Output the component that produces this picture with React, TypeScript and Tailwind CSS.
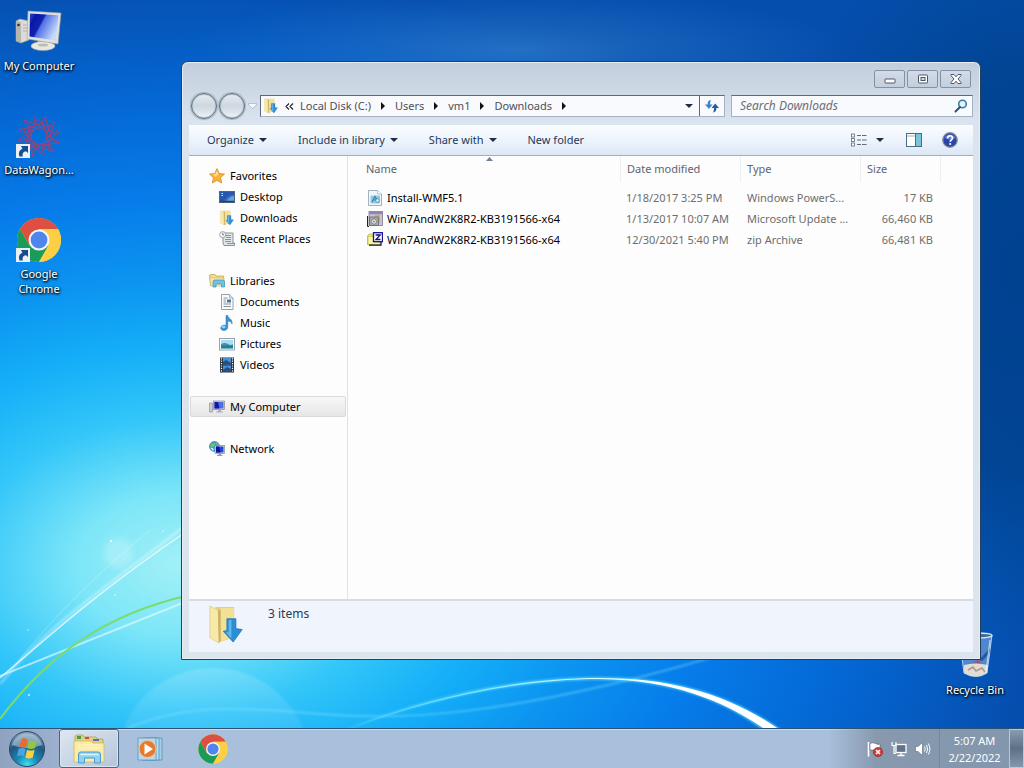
import { useState } from "react";
import type { ReactNode } from "react";

interface NavItem {
  label: string;
  icon: ReactNode;
}

interface NavGroup {
  root: NavItem;
  children: NavItem[];
}

interface FileRow {
  name: string;
  date: string;
  type: string;
  size: string;
  icon: ReactNode;
}

/* ---------- Wallpaper ---------- */

function Wallpaper() {
  return (
    <svg
      className="absolute inset-0 h-full w-full"
      viewBox="0 0 1024 728"
      preserveAspectRatio="none"
      aria-hidden="true"
    >
      <defs>
        <radialGradient
          id="sky"
          gradientUnits="userSpaceOnUse"
          cx="0"
          cy="0"
          r="1"
          gradientTransform="translate(180 565) scale(860 590)"
        >
          <stop offset="0" stopColor="#a2f0f6" />
          <stop offset="0.12" stopColor="#7de6f8" />
          <stop offset="0.25" stopColor="#33c6f9" />
          <stop offset="0.37" stopColor="#14aef8" />
          <stop offset="0.48" stopColor="#0c95f0" />
          <stop offset="0.62" stopColor="#067cea" />
          <stop offset="0.8" stopColor="#0466d2" />
          <stop offset="1" stopColor="#064eae" />
        </radialGradient>
        <radialGradient
          id="rightShade"
          gradientUnits="userSpaceOnUse"
          cx="0"
          cy="0"
          r="1"
          gradientTransform="translate(1024 270) scale(260 400)"
        >
          <stop offset="0" stopColor="#004290" />
          <stop offset="0.5" stopColor="#00438f" stopOpacity="0.85" />
          <stop offset="1" stopColor="#004a9c" stopOpacity="0" />
        </radialGradient>
        <radialGradient id="topGlow">
          <stop offset="0" stopColor="#3b86d0" stopOpacity="0.55" />
          <stop offset="1" stopColor="#2f7bcb" stopOpacity="0" />
        </radialGradient>
        <linearGradient id="bubble" x1="0" y1="0" x2="0" y2="1">
          <stop offset="0" stopColor="#fff" stopOpacity="0.16" />
          <stop offset="0.5" stopColor="#fff" stopOpacity="0.02" />
        </linearGradient>
        <linearGradient id="blade" x1="0" y1="0" x2="1" y2="0">
          <stop offset="0" stopColor="#7ff0ff" stopOpacity="0.2" />
          <stop offset="0.35" stopColor="#8ff0ff" stopOpacity="0.9" />
          <stop offset="0.7" stopColor="#fff" />
          <stop offset="1" stopColor="#fff" />
        </linearGradient>
        <filter id="soft">
          <feGaussianBlur stdDeviation="1.2" />
        </filter>
        <filter id="softer">
          <feGaussianBlur stdDeviation="3" />
        </filter>
      </defs>
      <rect width="1024" height="728" fill="url(#sky)" />
      <rect x="740" width="284" height="728" fill="url(#rightShade)" />
      <ellipse cx="520" cy="50" rx="330" ry="60" fill="url(#topGlow)" />

      <circle cx="118" cy="553" r="15" fill="#fff" opacity="0.22" filter="url(#softer)" />
      <path d="M0 684C50 622 110 585 190 522" fill="none" stroke="#fff" strokeWidth="3" opacity="0.3" filter="url(#soft)" />
      <path d="M0 678C50 635 100 590 190 529" fill="none" stroke="#fff" strokeWidth="1.5" opacity="0.7" />
      <path d="M10 672C50 620 90 580 150 530" fill="none" stroke="#fff" opacity="0.25" />
      <path d="M0 676C60 652 120 628 190 600" fill="none" stroke="#e4fbff" strokeWidth="2" opacity="0.65" />
      <path d="M0 719C48 655 105 614 190 595" fill="none" stroke="#79dc6c" strokeWidth="2" />
      <g fill="#fff" opacity="0.8">
        <circle cx="111" cy="541" r="1.2" />
        <circle cx="163" cy="531" r="0.8" />
        <circle cx="115" cy="595" r="0.8" />
        <circle cx="29" cy="695" r="1" />
        <circle cx="28" cy="630" r="0.7" />
      </g>

      <circle cx="213" cy="765" r="97" fill="url(#bubble)" filter="url(#soft)" />
      <path d="M128 728C190 702 250 708 320 714S500 720 720 655" fill="none" stroke="#8fe6ff" strokeWidth="2" opacity="0.4" filter="url(#soft)" />
      <path d="M340 732C430 694 520 677 600 677C680 677 735 697 785 732L766 732C725 702 676 681 600 680C520 680 430 698 340 732Z" fill="#5cd8ff" opacity="0.8" filter="url(#soft)" />
      <path d="M345 730C430 696 520 678 600 678C680 678 735 698 783 732L769 732C728 703 676 680 600 679C520 679 430 698 345 730Z" fill="url(#blade)" />
    </svg>
  );
}

/* ---------- Icons ---------- */

function ChromeIcon({ className }: { className: string }) {
  return (
    <svg viewBox="0 0 48 48" className={className} aria-hidden="true">
      <circle cx="24" cy="24" r="22" fill="#fdcf45" />
      <path d="M4.95 13A22 22 0 0 1 43.05 13L24 13L14.5 29.5Z" fill="#dd4f41" />
      <path d="M4.95 13A22 22 0 0 0 24 46L33.5 29.5L24 34L14.5 29.5Z" fill="#1a9c58" />
      <path d="M43.05 13A22 22 0 0 1 24 46L33.5 29.5L30 15L24 13Z" fill="#fdcf45" />
      <circle cx="24" cy="24" r="10.5" fill="#f4f6fa" />
      <circle cx="24" cy="24" r="8.4" fill="#4e86ee" />
    </svg>
  );
}

function ShortcutArrow() {
  return (
    <svg viewBox="0 0 14 14" className="absolute bottom-[2px] left-px h-[14px] w-[14px]" aria-hidden="true">
      <rect width="14" height="14" fill="#e9f0f7" />
      <path d="M3.500 12.500C2 8 4 5.500 6.500 5L5 2L12 2L12 9L10 7.200C7.500 7.500 6 9 6.800 12.500Z" fill="#174d8c" />
    </svg>
  );
}

function ComputerIcon() {
  return (
    <svg viewBox="0 0 48 48" className="h-12 w-12" aria-hidden="true">
      <defs>
        <linearGradient id="pcScreen" x1="0" y1="0" x2="1" y2="0.5">
          <stop offset="0" stopColor="#2a4fe0" />
          <stop offset="0.2" stopColor="#0a17a4" />
          <stop offset="0.45" stopColor="#1023b4" />
          <stop offset="0.5" stopColor="#5070e6" />
          <stop offset="1" stopColor="#c8dafa" />
        </linearGradient>
      </defs>
      <path d="M1 13L5 11L14 13V32L6 35L1 33Z" fill="#dcdbd6" stroke="#9a9a96" strokeWidth="0.6" />
      <path d="M1 13L6 14V35L1 33Z" fill="#b6b5af" />
      <path d="M8 17H12M8 20H12M8 23H12" stroke="#a9a8a2" strokeWidth="0.8" />
      <circle cx="3.500" cy="17" r="1.300" fill="#333" />
      <path d="M23 32H33L34 38H22Z" fill="#c9c8c2" />
      <ellipse cx="28" cy="38" rx="12" ry="4.500" fill="#e8e7e1" stroke="#a5a49d" strokeWidth="0.6" />
      <ellipse cx="28" cy="37" rx="5" ry="1.500" fill="#bcbbb4" />
      <path d="M13 3L46 5L43 36L12 31Z" fill="#e1e2e0" stroke="#9c9c98" strokeWidth="0.6" />
      <path d="M15 5.500L43.500 7.200L41 32.500L14.500 28.500Z" fill="url(#pcScreen)" />
    </svg>
  );
}

function WagonIcon() {
  return (
    <svg viewBox="0 0 48 48" className="h-12 w-12" aria-hidden="true">
      <g fill="none" stroke="#b23a68" strokeWidth="0.7">
        {[0, 30, 60, 90, 120, 150].map((angle) => (
          <g key={angle} transform={`rotate(${angle} 24 24)`}>
            <path d="M19 3L29 14L30 19M29 45L19 34L18 29" stroke="#c93a55" />
            <path d="M31 9L19 14L17 20M17 39L29 34L31 28" />
            <path d="M18 5Q24 20 30 5M18 43Q24 28 30 43" strokeDasharray="2 1" />
          </g>
        ))}
        <circle cx="24" cy="24" r="8" stroke="#c93a55" strokeDasharray="3 1" />
      </g>
    </svg>
  );
}

function RecycleIcon() {
  return (
    <svg viewBox="0 0 48 48" className="h-12 w-12" aria-hidden="true">
      <path d="M8 3L41 3L36 41Q25 48 13 41Z" fill="#b9d8f2" fillOpacity="0.4" stroke="#d8ecfa" strokeWidth="0.8" />
      <path d="M13 33Q24 30 37 33L36 41Q25 48 13 41Z" fill="#e3dcd6" />
      <path d="M17 38L22 35L25 39L31 36L34 40" fill="none" stroke="#a9998f" strokeWidth="1.500" />
      <path d="M22 31L27 28L30 31Z" fill="#a8506e" />
      <path d="M28 28L39 16L38 22L31 29Z" fill="#1b4d94" opacity="0.8" />
      <ellipse cx="24.500" cy="3.500" rx="16.500" ry="2.500" fill="#3d6a91" stroke="#d8e6ee" strokeWidth="1.300" />
      <path d="M39 8L35 40" stroke="#fff" strokeWidth="1.200" opacity="0.6" />
    </svg>
  );
}

function DownloadFolder({ className }: { className: string }) {
  return (
    <svg viewBox="0 0 40 44" className={className} aria-hidden="true">
      <path d="M8 2H29V36L13 41Z" fill="#e6cf7c" />
      <path d="M14 3H29V35L14 40Z" fill="#f1e096" />
      <path d="M2 1L12 6V42L2 36Z" fill="#f7e9a8" stroke="#d8c070" strokeWidth="0.6" />
      <path d="M11 6L14 5V40L12 42Z" fill="#cdb063" />
      <path d="M21 15L31 15V26L38 27L28 41L17 29L21 28Z" fill="#2b8fd6" stroke="#1d6fb5" strokeWidth="0.8" />
      <path d="M23 17L26 16V37L20 30H23Z" fill="#62b6ea" />
    </svg>
  );
}

function SmallPc() {
  return (
    <svg viewBox="0 0 16 16" className="h-4 w-4" aria-hidden="true">
      <path d="M0.500 4H3.500V13H0.500Z" fill="#c9ccd0" stroke="#82868c" strokeWidth="0.6" />
      <rect x="4.500" y="2" width="11" height="8.500" fill="#d9dce0" stroke="#777" strokeWidth="0.6" />
      <rect x="5.500" y="3" width="9" height="6.500" fill="#4b6ee0" />
      <path d="M5.500 3H9L10.500 9.500H5.500Z" fill="#1515a8" />
      <path d="M9 10.500H12V12.500H14V13.500H7V12.500H9Z" fill="#aaafb4" />
    </svg>
  );
}

const starIcon = (
  <svg viewBox="0 0 16 16" className="h-4 w-4" aria-hidden="true">
    <path d="M8 0.600L10.200 5.500L15.500 6.100L11.600 9.700L12.700 15L8 12.300L3.300 15L4.400 9.700L0.500 6.100L5.800 5.500Z" fill="#f9b233" stroke="#d98a2b" strokeWidth="0.8" />
    <path d="M8 2.500L9.500 6.200L6 9L5 7L3 6.700L6.300 6.200Z" fill="#fde39a" />
  </svg>
);

const desktopIcon = (
  <svg viewBox="0 0 16 16" className="h-4 w-4" aria-hidden="true">
    <rect x="0.500" y="2.500" width="15" height="11" fill="#3b6fc4" stroke="#53647c" />
    <path d="M1 3H15V6Q9 5 5 12H1Z" fill="#2857ae" />
    <path d="M8 12Q11 7 15 7V12Z" fill="#63a4e4" />
    <rect x="1" y="11.800" width="14" height="1.400" fill="#29405f" />
    <path d="M2.500 4.500H4M2.500 6.500H4" stroke="#d9e8fa" />
  </svg>
);

const recentIcon = (
  <svg viewBox="0 0 16 16" className="h-4 w-4" aria-hidden="true">
    <path d="M4 2H14V12H15.500V14.500H5L4 12Z" fill="#e3e6e8" stroke="#7f868c" strokeWidth="0.9" />
    <path d="M7 4.500H12M7 6.500H12M6 8.500H12M6 10.500H12M8 12.500H15" stroke="#8d959b" />
    <circle cx="3.700" cy="3.700" r="3.100" fill="#f4f6f7" stroke="#8c9298" strokeWidth="0.8" />
    <path d="M3.700 1.800V3.900H5.200" fill="none" stroke="#5a6268" strokeWidth="0.8" />
  </svg>
);

const librariesIcon = (
  <svg viewBox="0 0 16 16" className="h-4 w-4" aria-hidden="true">
    <path d="M0.500 3Q0.500 1.500 2 1.500H6L7 3H14.500V12.500H1.500Z" fill="#f3dc87" stroke="#c2a654" strokeWidth="0.8" />
    <path d="M1 5H15V13H2Z" fill="#f9ecb2" stroke="#cdb566" strokeWidth="0.6" />
    <path d="M4 8.500Q4 7 5.500 7H14Q15.500 7 15.500 8.500V14H12.500V11H7V14H4Z" fill="#6fc4e4" stroke="#3b8fb6" strokeWidth="0.7" />
  </svg>
);

const documentIcon = (
  <svg viewBox="0 0 16 16" className="h-4 w-4" aria-hidden="true">
    <path d="M2.500 0.500H10.500L14 4V15.500H2.500Z" fill="#fbfcfc" stroke="#7f8a92" strokeWidth="0.8" />
    <path d="M10.500 0.500V4H14" fill="#dfe5e8" stroke="#7f8a92" strokeWidth="0.6" />
    <path d="M4.500 4H8.500M4.500 6H7M4.500 8H7M4.500 10H12M4.500 12.500H12" stroke="#748a99" strokeWidth="0.9" />
    <rect x="8" y="5.500" width="4" height="3" fill="#49799a" />
  </svg>
);

const musicIcon = (
  <svg viewBox="0 0 16 16" className="h-4 w-4" aria-hidden="true">
    <path d="M7 0.500H8.800C9 3.500 14 4 13 9C12.700 6.800 10.500 6 8.800 6V12C8.800 14.500 6.500 15.800 4.300 15.400C1.500 15 1 12.400 2.800 11C4 10 5.700 10 7 10.500Z" fill="#3a94d8" stroke="#2369a8" strokeWidth="0.5" />
    <ellipse cx="4.500" cy="12" rx="2" ry="1.300" fill="#8fd0f5" />
  </svg>
);

const picturesIcon = (
  <svg viewBox="0 0 16 16" className="h-4 w-4" aria-hidden="true">
    <rect x="0.500" y="2.500" width="15" height="11.500" fill="#fbfcfd" stroke="#8b99a6" strokeWidth="0.9" />
    <rect x="2" y="4" width="12" height="8.500" fill="#a7def3" />
    <path d="M2 8Q6 6 9 8T14 8V10H2Z" fill="#45969e" />
    <rect x="2" y="9.500" width="12" height="3" fill="#247d9a" />
  </svg>
);

const videosIcon = (
  <svg viewBox="0 0 16 16" className="h-4 w-4" aria-hidden="true">
    <rect x="1" y="0.500" width="14" height="15" fill="#26313d" />
    <rect x="4" y="1" width="8" height="6.500" fill="#4c8fd2" />
    <rect x="4" y="8.500" width="8" height="6.500" fill="#4c8fd2" />
    <path d="M4 5L7 3L12 6V7.500H4ZM4 13L8 10L12 12V15H4Z" fill="#23507f" />
    <path d="M2.500 1.200V15M13.500 1.200V15" stroke="#fff" strokeWidth="1.200" strokeDasharray="1.200 1.200" />
  </svg>
);

const networkIcon = (
  <svg viewBox="0 0 16 16" className="h-4 w-4" aria-hidden="true">
    <circle cx="5.500" cy="5.500" r="5" fill="#3f9fd0" stroke="#2b739c" strokeWidth="0.6" />
    <path d="M2 3Q5 1 6 3T3 6Q1 7 1.500 4ZM7 1Q9 2 9.500 4L7 3.500Z" fill="#6cc46b" />
    <path d="M1.500 7Q4 6 5 9L3.500 9.500Z" fill="#d5effb" />
    <rect x="6" y="4.500" width="9.500" height="8" fill="#dfe3e8" stroke="#747b84" strokeWidth="0.6" />
    <rect x="7" y="5.500" width="7.500" height="6" fill="#2346d4" />
    <path d="M7 5.500H10L11.500 11.500H7Z" fill="#0c1596" />
    <path d="M9.500 12.500H12V14H13.500V15H8V14H9.500Z" fill="#969ca3" />
  </svg>
);

const scriptFileIcon = (
  <svg viewBox="0 0 16 16" className="h-4 w-4" aria-hidden="true">
    <path d="M1.500 0.500H10.500L14.500 4V15.500H1.500Z" fill="#eef6fa" stroke="#8ba0ad" strokeWidth="0.8" />
    <path d="M10.500 0.500V4H14.500" fill="#fff" stroke="#8ba0ad" strokeWidth="0.6" />
    <rect x="3.500" y="5.500" width="9.500" height="8" rx="1" fill="#8fcbe6" />
    <path d="M5 12L8 6.500L11 12M6 10H10" fill="none" stroke="#3484b0" strokeWidth="1.200" />
    <circle cx="10.500" cy="10.500" r="1.800" fill="#e5f4fb" stroke="#2f7ea9" strokeWidth="0.7" />
  </svg>
);

const updateFileIcon = (
  <svg viewBox="0 0 16 16" className="h-4 w-4" aria-hidden="true">
    <rect x="2" y="0.500" width="13.500" height="14" fill="#c7c5d4" stroke="#7a7888" strokeWidth="0.8" />
    <rect x="2.500" y="1" width="12.500" height="2.200" fill="#8c86b6" />
    <path d="M8 4H13V12H11V6H8Z" fill="#e8a83a" />
    <rect x="2.500" y="6" width="9" height="8.500" fill="#a4a8ad" stroke="#5d6165" strokeWidth="0.7" />
    <circle cx="7" cy="10.500" r="2.600" fill="#dfe2e4" stroke="#666" strokeWidth="0.6" />
    <circle cx="7" cy="10.500" r="0.800" fill="#666" />
    <path d="M0.500 5V15.500H2" fill="none" stroke="#222" />
  </svg>
);

const zipFileIcon = (
  <svg viewBox="0 0 16 16" className="h-4 w-4" aria-hidden="true">
    <path d="M0.500 4L2 2H5L6 3.500V12.500H0.500Z" fill="#eeee66" stroke="#a3a33c" strokeWidth="0.6" />
    <path d="M1 4.500H13V12.500H1Z" fill="#f6f7a2" stroke="#b8b84c" strokeWidth="0.6" />
    <path d="M2 13.200H14V10" fill="none" stroke="#111" strokeWidth="1.200" />
    <rect x="6.500" y="0.700" width="9" height="9" fill="#fff" stroke="#12128a" strokeWidth="1.300" />
    <path d="M8.600 3H13.200L9 7.500H13.500" fill="none" stroke="#12128a" strokeWidth="1.300" />
  </svg>
);

function DownArrow() {
  return (
    <svg viewBox="0 0 8 4" className="h-1 w-2 shrink-0" aria-hidden="true">
      <path d="M0 0H8L4 4Z" fill="#1e2c44" />
    </svg>
  );
}

function StartOrb() {
  return (
    <svg viewBox="0 0 38 38" className="h-[38px] w-[38px]" aria-hidden="true">
      <defs>
        <radialGradient id="orb" cx="0.5" cy="0.95" r="0.9">
          <stop offset="0" stopColor="#3fe0f5" />
          <stop offset="0.35" stopColor="#1687b4" />
          <stop offset="0.7" stopColor="#22567e" />
          <stop offset="1" stopColor="#7f9fb8" />
        </radialGradient>
      </defs>
      <circle cx="19" cy="19" r="17.500" fill="url(#orb)" stroke="#2b4763" />
      <path d="M4 15A15.500 15.500 0 0 1 34 15Q19 21 4 15Z" fill="#cfe0ec" opacity="0.5" />
      <path d="M13.500 9Q16.500 7.500 19.500 9.500L18 17.500Q14.500 15.500 11 17.500Z" fill="#ee6a2c" />
      <path d="M21 10.300Q25 12 29 10.300L27 18Q23 20 19.300 18Z" fill="#93c83e" />
      <path d="M10.500 19Q14 17 17.600 19L16 26.500Q12.500 24.500 9 26.500Z" fill="#4ba4e0" />
      <path d="M19 19.700Q23 21.500 26.600 19.700L24.800 27.500Q21 29.500 17.300 27.500Z" fill="#fcd03c" />
    </svg>
  );
}

function ExplorerIcon() {
  return (
    <svg viewBox="0 0 34 30" className="h-[30px] w-[34px]" aria-hidden="true">
      <path d="M3 3Q3 1 5 1H11L12 3H24L25 5H31V27H3Z" fill="#e9cf77" stroke="#b39a4c" strokeWidth="0.7" />
      <path d="M5 2H9V5H5Z" fill="#3fa046" />
      <path d="M13 3H17V5H13Z" fill="#cf4b3b" />
      <path d="M2 7H19L21 9H32V28H2Z" fill="#faeba6" stroke="#cdb565" strokeWidth="0.7" />
      <path d="M21 5H27V7H21Z" fill="#4776d0" />
      <path d="M6 11H28M6 14H28" stroke="#fdf6cf" />
      <path d="M6.500 29V20Q6.500 18 9 18H26Q28.500 18 28.500 20V29H22.500V24H12.500V29Z" fill="#8fd2f0" stroke="#4b9ccb" />
      <path d="M8.500 20.500H26.500" stroke="#d9f3fd" strokeWidth="1.500" />
    </svg>
  );
}

function MediaIcon() {
  return (
    <svg viewBox="0 0 28 26" className="h-[26px] w-7" aria-hidden="true">
      <path d="M10 2H26V24H10Z" fill="#a9cfe4" stroke="#4f94bb" strokeWidth="0.8" />
      <path d="M6 2H23V24H6Z" fill="#b9dcee" stroke="#4f94bb" strokeWidth="0.8" />
      <path d="M2 2H20V24H2Z" fill="#bdd6e8" stroke="#5795b9" strokeWidth="0.8" />
      <circle cx="11.500" cy="13" r="8.500" fill="#e87a2c" stroke="#f6cba5" strokeWidth="0.8" />
      <path d="M8.500 7.500L17 13L8.500 18.500Z" fill="#fff" />
    </svg>
  );
}

/* ---------- Data ---------- */

const navGroups: NavGroup[] = [
  {
    root: { label: "Favorites", icon: starIcon },
    children: [
      { label: "Desktop", icon: desktopIcon },
      { label: "Downloads", icon: <DownloadFolder className="h-4 w-4" /> },
      { label: "Recent Places", icon: recentIcon },
    ],
  },
  {
    root: { label: "Libraries", icon: librariesIcon },
    children: [
      { label: "Documents", icon: documentIcon },
      { label: "Music", icon: musicIcon },
      { label: "Pictures", icon: picturesIcon },
      { label: "Videos", icon: videosIcon },
    ],
  },
  { root: { label: "My Computer", icon: <SmallPc /> }, children: [] },
  { root: { label: "Network", icon: networkIcon }, children: [] },
];

const files: FileRow[] = [
  {
    name: "Install-WMF5.1",
    date: "1/18/2017 3:25 PM",
    type: "Windows PowerS...",
    size: "17 KB",
    icon: scriptFileIcon,
  },
  {
    name: "Win7AndW2K8R2-KB3191566-x64",
    date: "1/13/2017 10:07 AM",
    type: "Microsoft Update ...",
    size: "66,460 KB",
    icon: updateFileIcon,
  },
  {
    name: "Win7AndW2K8R2-KB3191566-x64",
    date: "12/30/2021 5:40 PM",
    type: "zip Archive",
    size: "66,481 KB",
    icon: zipFileIcon,
  },
];

const crumbs = ["Local Disk (C:)", "Users", "vm1", "Downloads"];

/* ---------- Desktop ---------- */

function DesktopShortcut({
  label,
  shortcut = false,
  children,
}: {
  label: string;
  shortcut?: boolean;
  children: ReactNode;
}) {
  return (
    <button
      type="button"
      className="flex w-[78px] flex-col items-center gap-[2px] text-center leading-[15px] text-white [text-shadow:1px_1px_2px_#000,0_1px_3px_#000]"
    >
      <span className="relative h-12 w-12">
        {children}
        {shortcut && <ShortcutArrow />}
      </span>
      <span>{label}</span>
    </button>
  );
}

/* ---------- Explorer window ---------- */

const captionButton =
  "flex h-[18px] w-[31px] items-center justify-center rounded-[2px] border border-[#8492a6] bg-linear-to-b from-[#d3dce7] to-[#c3cfde]";

function TitleBar() {
  return (
    <div className="flex h-[30px] items-start justify-end gap-[2px] pt-2 pr-[2px]">
      <button type="button" aria-label="Minimize" className={captionButton}>
        <svg viewBox="0 0 12 10" className="h-[10px] w-3" aria-hidden="true">
          <rect x="1" y="5" width="10" height="4" rx="0.5" fill="#fff" stroke="#4c566a" />
        </svg>
      </button>
      <button type="button" aria-label="Maximize" className={captionButton}>
        <svg viewBox="0 0 12 10" className="h-[10px] w-3" aria-hidden="true">
          <rect x="1.500" y="1" width="9" height="8" rx="0.5" fill="#fff" stroke="#4c566a" />
          <rect x="4" y="3.500" width="4" height="3" fill="#cfd8e4" stroke="#4c566a" />
        </svg>
      </button>
      <button type="button" aria-label="Close" className={captionButton}>
        <svg viewBox="0 0 12 10" className="h-[10px] w-3" aria-hidden="true">
          <path d="M1 0.500H4L6 2.800L8 0.500H11V1.500L8 5L11 8.500V9.500H8L6 7.200L4 9.500H1V8.500L4 5L1 1.500Z" fill="#fff" stroke="#4c566a" />
        </svg>
      </button>
    </div>
  );
}

const roundButton =
  "h-[26px] w-[26px] rounded-full border border-[#5f6d7c] bg-linear-to-b from-[#e6ecf1] via-[#cdd7df] to-[#eef3f7] shadow-[inset_0_0_0_1px_#b4c0cb,0_0_1px_1px_#aab7c5]";

function AddressRow() {
  return (
    <div className="mb-[5px] flex h-7 items-center pl-[2px]">
      <div className="flex gap-[2px]">
        <button type="button" aria-label="Back" className={roundButton} />
        <button type="button" aria-label="Forward" className={roundButton} />
      </div>
      <button type="button" aria-label="Recent pages" className="mr-[3px] ml-[3px]">
        <svg viewBox="0 0 9 6" className="h-[6px] w-[9px]" aria-hidden="true">
          <path d="M0.500 0.500H8.500V2L4.500 5.500L0.500 2Z" fill="#f4f8fb" stroke="#a9b6c5" strokeWidth="0.8" />
        </svg>
      </button>
      <div className="flex h-[22px] min-w-0 flex-1 items-center border border-[#a3b2c3] border-t-[#59687a] border-l-[#59687a] bg-[#f9fafe] text-[#4f4f57]">
        <DownloadFolder className="mx-[2px] h-4 w-4 shrink-0" />
        <svg viewBox="0 0 9 7" className="mr-[6px] ml-1 h-[7px] w-[9px]" aria-hidden="true">
          <path d="M4 0.500L1 3.500L4 6.500M8 0.500L5 3.500L8 6.500" fill="none" stroke="#222" strokeWidth="1.100" />
        </svg>
        <nav aria-label="Address" className="flex items-center">
          {crumbs.map((crumb) => (
            <span key={crumb} className="flex items-center">
              <button type="button">{crumb}</button>
              <svg viewBox="0 0 4 8" className="mx-[10px] h-2 w-1" aria-hidden="true">
                <path d="M0 0L4 4L0 8Z" fill="#111" />
              </svg>
            </span>
          ))}
        </nav>
        <button type="button" aria-label="Previous locations" className="mr-[6px] ml-auto">
          <DownArrow />
        </button>
        <button
          type="button"
          aria-label="Refresh"
          className="flex h-full w-[25px] items-center justify-center border-l border-[#59687a]"
        >
          <svg viewBox="0 0 16 16" className="h-4 w-4" aria-hidden="true">
            <path d="M7 2C4 2.500 3.500 4 3.700 6.500H1L4.900 11L8.600 6.500H6.200C6 5 6.200 3.500 7 2Z" fill="#3f86c9" />
            <path d="M9 14.500C12 14 12.500 12 12.300 10H15L11.200 5.500L7.500 10H9.900C10 11.500 9.800 13 9 14.500Z" fill="#275f9e" />
          </svg>
        </button>
      </div>
      <label className="ml-[6px] flex h-[22px] w-[242px] items-center border border-[#a3b2c3] border-t-[#59687a] bg-[#f9fafe] px-2">
        <input
          type="text"
          aria-label="Search Downloads"
          placeholder="Search Downloads"
          className="min-w-0 flex-1 bg-transparent text-[12px] italic outline-none placeholder:text-[#6d6d74]"
        />
        <svg viewBox="0 0 14 14" className="-mr-1 h-[14px] w-[14px]" aria-hidden="true">
          <circle cx="8.500" cy="5" r="3.800" fill="#e4f3fa" stroke="#3a7fa5" strokeWidth="1.600" />
          <path d="M6 8L1.500 12.500" stroke="#2f4f74" strokeWidth="2" strokeLinecap="round" />
        </svg>
      </label>
    </div>
  );
}

function CommandBar() {
  return (
    <div className="flex h-[31px] items-center gap-[31px] border-b border-[#a0afc3] bg-linear-to-b from-[#fbfdff] via-[#edf4fc] via-50% to-[#dce7f5] pr-[15px] pl-[18px] text-[#1e395b]">
      {["Organize", "Include in library", "Share with"].map((label) => (
        <button key={label} type="button" className="flex items-center gap-[5px]">
          {label}
          <DownArrow />
        </button>
      ))}
      <button type="button">New folder</button>
      <div className="ml-auto flex items-center">
        <button type="button" aria-label="Change your view" className="flex items-center gap-[9px]">
          <svg viewBox="0 0 16 14" className="h-[14px] w-4" aria-hidden="true">
            <g fill="#fff" stroke="#5e6b7c" strokeWidth="0.8">
              <rect x="0.500" y="1" width="3" height="3" />
              <rect x="0.500" y="5.500" width="3" height="3" />
              <rect x="0.500" y="10" width="3" height="3" />
            </g>
            <path d="M6 2.500H10M11 2.500H15.500M6 7H10M11 7H15.500M6 11.500H10M11 11.500H15.500" stroke="#5e6b7c" />
          </svg>
          <DownArrow />
        </button>
        <button type="button" aria-label="Show the preview pane" className="ml-[22px]">
          <svg viewBox="0 0 16 14" className="h-[14px] w-4" aria-hidden="true">
            <rect x="0.500" y="0.500" width="15" height="13" fill="#fdfefe" stroke="#4c6c86" />
            <path d="M1 3H10" stroke="#9db2c2" />
            <rect x="10" y="1" width="5" height="12" fill="#7cc3dc" />
            <path d="M9.500 1V13" stroke="#4c6c86" />
          </svg>
        </button>
        <button type="button" aria-label="Get help" className="ml-5">
          <svg viewBox="0 0 16 16" className="h-4 w-4" aria-hidden="true">
            <circle cx="8" cy="8" r="7.300" fill="#2b44a8" stroke="#8e949e" strokeWidth="1.300" />
            <path d="M2.500 6A6 6 0 0 1 13.500 6Q8 9 2.500 6Z" fill="#7d98e0" opacity="0.7" />
            <path d="M5.700 6.200C5.700 3 10.500 3 10.500 6C10.500 7.800 8.200 7.800 8.200 9.800" fill="none" stroke="#fff" strokeWidth="1.700" />
            <circle cx="8.200" cy="12" r="1.100" fill="#fff" />
          </svg>
        </button>
      </div>
    </div>
  );
}

function NavPane({ selected, onSelect }: { selected: string; onSelect: (label: string) => void }) {
  const rowClass = (label: string) =>
    selected === label
      ? "rounded-[2px] border-[#d9d9d9] bg-linear-to-b from-[#f8f8f8] to-[#e6e6e6]"
      : "border-transparent";

  return (
    <nav
      aria-label="Folders"
      className="flex w-[159px] shrink-0 flex-col gap-[21px] overflow-hidden border-r border-[#dbe3f0] px-[1px] pt-[9px]"
    >
      {navGroups.map((group) => (
        <div key={group.root.label}>
          <button
            type="button"
            onClick={() => onSelect(group.root.label)}
            className={`flex h-[21px] w-full items-center gap-[5px] border pl-[18px] ${rowClass(group.root.label)}`}
          >
            {group.root.icon}
            {group.root.label}
          </button>
          {group.children.map((item) => (
            <button
              key={item.label}
              type="button"
              onClick={() => onSelect(item.label)}
              className={`flex h-[21px] w-full items-center gap-[5px] border pl-7 ${rowClass(item.label)}`}
            >
              {item.icon}
              {item.label}
            </button>
          ))}
        </div>
      ))}
    </nav>
  );
}

function FileTable() {
  return (
    <div className="relative min-w-0 flex-1">
      {/* Sort direction marker */}
      <svg viewBox="0 0 7 4" className="absolute top-px left-[138px] h-1 w-[7px]" aria-hidden="true">
        <path d="M0 4L3.500 0L7 4Z" fill="#6c7f96" />
      </svg>
      <table className="w-full table-fixed border-collapse text-left">
        <colgroup>
          <col className="w-[272px]" />
          <col className="w-[120px]" />
          <col className="w-[120px]" />
          <col className="w-[80px]" />
          <col />
        </colgroup>
        <thead className="text-[#5c6470]">
          <tr className="h-[31px] align-top">
            <th className="p-0 font-normal">
              <div className="flex h-[26px] items-center pl-[18px]">Name</div>
            </th>
            {["Date modified", "Type", "Size"].map((label) => (
              <th key={label} className="p-0 font-normal">
                <div className="flex h-[26px] items-center border-l border-[#eceff3] pl-[6px]">{label}</div>
              </th>
            ))}
            <td className="p-0">
              <div className="h-[26px] border-l border-[#eceff3]" />
            </td>
          </tr>
        </thead>
        <tbody className="whitespace-nowrap text-[#6d6d6d]">
          {files.map((file) => (
            <tr key={file.date} className="h-[21px]">
              <td className="p-0 pl-[19px] text-black">
                <div className="flex items-center gap-1">
                  {file.icon}
                  {file.name}
                </div>
              </td>
              <td className="p-0 pl-[6px]">{file.date}</td>
              <td className="p-0 pl-[7px]">{file.type}</td>
              <td className="p-0 pr-[7px] text-right">{file.size}</td>
              <td />
            </tr>
          ))}
        </tbody>
      </table>
    </div>
  );
}

function ExplorerWindow() {
  const [selected, setSelected] = useState("My Computer");

  return (
    <section
      aria-label="Downloads"
      className="absolute top-[61px] right-[43px] bottom-[68px] left-[181px] flex flex-col rounded-t-[7px] border border-[#24405e] bg-[#dae3ee] bg-linear-to-b from-[#c2cedc] via-[#dae4ef] via-10% to-[#dce4ec] px-[7px] pb-[7px] shadow-[inset_0_0_0_1px_#e6edf4]"
    >
      <TitleBar />
      <AddressRow />
      <CommandBar />
      <div className="flex min-h-0 flex-1 bg-[#fdfdfe]">
        <NavPane selected={selected} onSelect={setSelected} />
        <FileTable />
      </div>
      <footer className="flex h-[53px] items-start border-t-2 border-[#d5dce8] bg-[#f0f4fd] pl-[19px] text-[12px] text-[#2a3a52]">
        <DownloadFolder className="mt-[2px] h-[44px] w-9" />
        <span className="mt-[5px] ml-6 leading-4">3 items</span>
      </footer>
    </section>
  );
}

/* ---------- Taskbar ---------- */

function Taskbar() {
  return (
    <footer className="flex h-10 shrink-0 items-stretch border-t border-[#2c5274] bg-[#a9c0dd] shadow-[inset_0_1px_0_#c9dbee]">
      <button
        type="button"
        aria-label="Start"
        className="flex w-[59px] items-center bg-linear-to-r from-[#8fa3c0] to-[#9db1cf] pl-2"
      >
        <StartOrb />
      </button>
      <button
        type="button"
        aria-label="Windows Explorer"
        className="flex w-[60px] items-center justify-center rounded-[3px] border border-[#4c6380] bg-linear-to-br from-[#dfe7f0] to-[#b4c5da] shadow-[inset_0_0_0_1px_#dce6f0]"
      >
        <ExplorerIcon />
      </button>
      <button type="button" aria-label="Windows Media Player" className="flex w-[62px] items-center justify-center">
        <MediaIcon />
      </button>
      <button type="button" aria-label="Google Chrome" className="flex w-16 items-center justify-center">
        <ChromeIcon className="h-8 w-8" />
      </button>
      <div className="ml-auto flex items-center bg-linear-to-r from-transparent via-[#8899ae] via-25% to-[#8296ad] pl-[40px] text-white">
        <div className="flex items-center gap-2 pr-2">
          <button type="button" aria-label="Action Center">
            <svg viewBox="0 0 16 16" className="h-4 w-4" aria-hidden="true">
              <path d="M1.500 1V15.500" stroke="#fff" strokeWidth="1.600" />
              <path d="M3 2.500Q6 1 8.500 2.500T13 3V9H3Z" fill="#fff" stroke="#3e4d60" strokeWidth="0.5" />
              <circle cx="11" cy="11" r="4.600" fill="#d23b32" stroke="#8b1f1c" strokeWidth="0.6" />
              <path d="M9 9L13 13M13 9L9 13" stroke="#fff" strokeWidth="1.600" />
            </svg>
          </button>
          <button type="button" aria-label="Network status">
            <svg viewBox="0 0 16 16" className="h-4 w-4" aria-hidden="true">
              <rect x="5" y="3.500" width="10" height="8" fill="#60738a" stroke="#fff" strokeWidth="1.300" />
              <path d="M10 12V14.500M6.500 14.500H13.500" stroke="#fff" strokeWidth="1.300" />
              <path d="M1 1V4.500H5V1M3 4.500V12.500H5" fill="none" stroke="#fff" strokeWidth="1.200" />
            </svg>
          </button>
          <button type="button" aria-label="Volume">
            <svg viewBox="0 0 16 16" className="h-4 w-4" aria-hidden="true">
              <path d="M0.500 5.500H3L7.500 1.500V14.500L3 10.500H0.500Z" fill="#fff" stroke="#4c5b6d" strokeWidth="0.5" />
              <path d="M9.500 5.500Q11 8 9.500 10.500M11.500 4Q13.800 8 11.500 12M13.300 2.500Q16.500 8 13.300 13.500" fill="none" stroke="#fff" />
            </svg>
          </button>
        </div>
        <button type="button" className="h-full w-[70px] border-l border-[#75879d] text-center leading-[17px]">
          <time className="block">5:07 AM</time>
          <time className="block">2/22/2022</time>
        </button>
        <button
          type="button"
          aria-label="Show desktop"
          className="h-full w-[15px] border border-[#b9c8d8] bg-linear-to-b from-[#8b9caf] via-[#5d7086] to-[#8497ab]"
        />
      </div>
    </footer>
  );
}

export default function App() {
  return (
    <div className="flex h-screen flex-col overflow-hidden bg-[#044cab] font-['Noto_Sans',sans-serif] text-[11px] leading-4">
      <main className="relative min-h-0 flex-1">
        <Wallpaper />
        <div className="relative flex w-[78px] flex-col pt-2">
          <div className="h-[104px]">
            <DesktopShortcut label="My Computer">
              <ComputerIcon />
            </DesktopShortcut>
          </div>
          <div className="h-[104px]">
            <DesktopShortcut label="DataWagon..." shortcut>
              <WagonIcon />
            </DesktopShortcut>
          </div>
          <div className="h-[104px]">
            <DesktopShortcut label="Google Chrome" shortcut>
              <ChromeIcon className="h-12 w-12" />
            </DesktopShortcut>
          </div>
        </div>
        <div className="absolute right-[10px] bottom-[31px]">
          <DesktopShortcut label="Recycle Bin">
            <RecycleIcon />
          </DesktopShortcut>
        </div>
        <ExplorerWindow />
      </main>
      <Taskbar />
    </div>
  );
}
